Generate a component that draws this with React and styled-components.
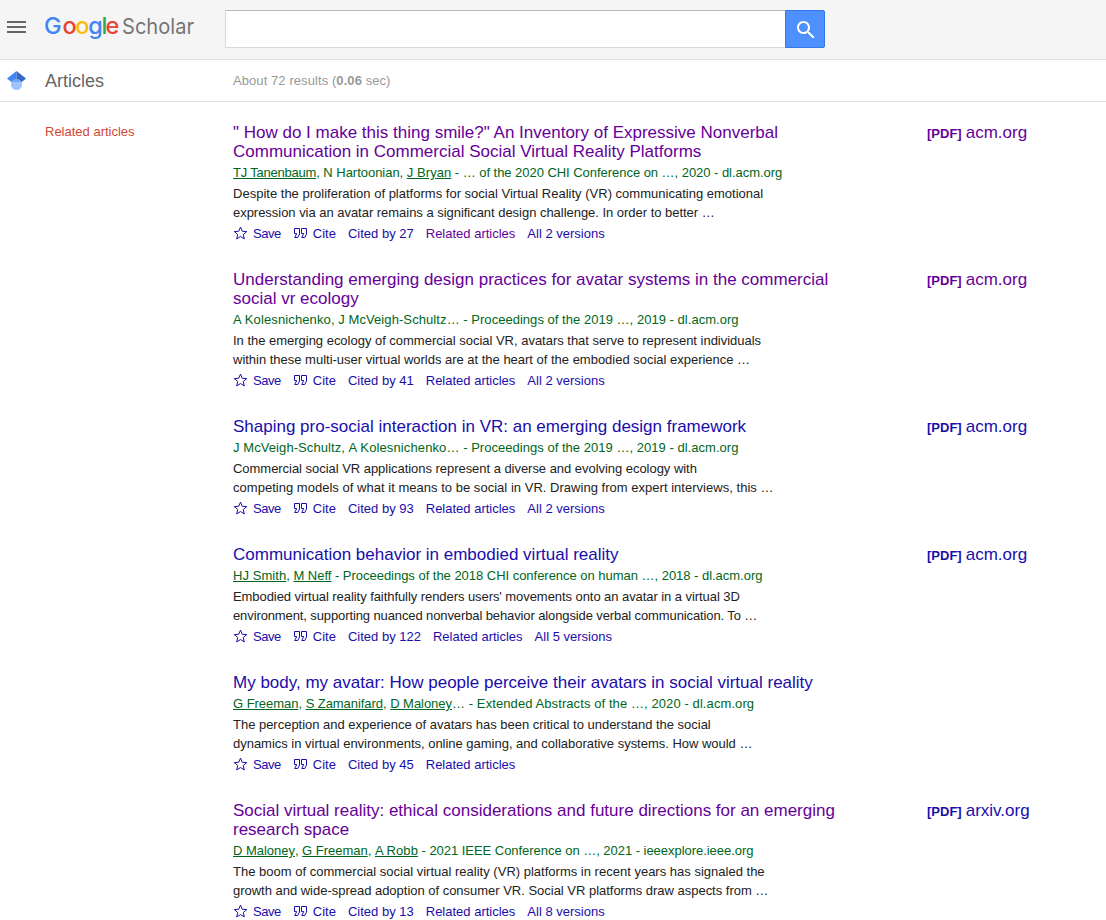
import React from "react";
import styled, { createGlobalStyle } from "styled-components";

const results = [
  {
    title: [
      '" How do I make this thing smile?" An Inventory of Expressive Nonverbal',
      "Communication in Commercial Social Virtual Reality Platforms",
    ],
    visited: true,
    relatedVisited: true,
    authors: [
      { name: "TJ Tanenbaum", link: true, spacing: -0.22 },
      { name: "N Hartoonian", spacing: -0.03 },
      { name: "J Bryan", link: true, spacing: 0.05 },
    ],
    source: " - … of the 2020 CHI Conference on …, 2020 - dl.acm.org",
    sourceSpacing: -0.04,
    snippet: [
      {
        text: "Despite the proliferation of platforms for social Virtual Reality (VR) communicating emotional",
        spacing: 0.009,
      },
      {
        text: "expression via an avatar remains a significant design challenge. In order to better …",
        spacing: -0.03,
      },
    ],
    cited: 27,
    versions: 2,
    pdf: "acm.org",
    pdfVisited: true,
  },
  {
    title: [
      "Understanding emerging design practices for avatar systems in the commercial",
      "social vr ecology",
    ],
    visited: true,
    authors: [
      { name: "A Kolesnichenko", spacing: 0.12 },
      { name: "J McVeigh-Schultz", spacing: 0.09 },
    ],
    source: "… - Proceedings of the 2019 …, 2019 - dl.acm.org",
    sourceSpacing: 0.03,
    snippet: [
      {
        text: "In the emerging ecology of commercial social VR, avatars that serve to represent individuals",
        spacing: -0.017,
      },
      {
        text: "within these multi-user virtual worlds are at the heart of the embodied social experience …",
        spacing: -0.011,
      },
    ],
    cited: 41,
    versions: 2,
    pdf: "acm.org",
    pdfVisited: true,
  },
  {
    title: ["Shaping pro-social interaction in VR: an emerging design framework"],
    authors: [
      { name: "J McVeigh-Schultz", spacing: 0.08 },
      { name: "A Kolesnichenko", spacing: 0.12 },
    ],
    source: "… - Proceedings of the 2019 …, 2019 - dl.acm.org",
    sourceSpacing: 0.03,
    snippet: [
      {
        text: "Commercial social VR applications represent a diverse and evolving ecology with",
        spacing: -0.037,
      },
      {
        text: "competing models of what it means to be social in VR. Drawing from expert interviews, this …",
        spacing: 0.024,
      },
    ],
    cited: 93,
    versions: 2,
    pdf: "acm.org",
  },
  {
    title: ["Communication behavior in embodied virtual reality"],
    authors: [
      { name: "HJ Smith", link: true, spacing: 0.06 },
      { name: "M Neff", link: true, spacing: -0.02 },
    ],
    source: " - Proceedings of the 2018 CHI conference on human …, 2018 - dl.acm.org",
    sourceSpacing: -0.026,
    snippet: [
      {
        text: "Embodied virtual reality faithfully renders users' movements onto an avatar in a virtual 3D",
        spacing: -0.064,
      },
      {
        text: "environment, supporting nuanced nonverbal behavior alongside verbal communication. To …",
        spacing: -0.11,
      },
    ],
    cited: 122,
    versions: 5,
    pdf: "acm.org",
  },
  {
    title: ["My body, my avatar: How people perceive their avatars in social virtual reality"],
    authors: [
      { name: "G Freeman", link: true, spacing: -0.04 },
      { name: "S Zamanifard", link: true, spacing: -0.06 },
      { name: "D Maloney", link: true, spacing: -0.04 },
    ],
    source: "… - Extended Abstracts of the …, 2020 - dl.acm.org",
    sourceSpacing: 0.09,
    snippet: [
      {
        text: "The perception and experience of avatars has been critical to understand the social",
        spacing: -0.017,
      },
      {
        text: "dynamics in virtual environments, online gaming, and collaborative systems. How would …",
        spacing: -0.018,
      },
    ],
    cited: 45,
  },
  {
    title: [
      "Social virtual reality: ethical considerations and future directions for an emerging",
      "research space",
    ],
    visited: true,
    authors: [
      { name: "D Maloney", link: true, spacing: -0.03 },
      { name: "G Freeman", link: true, spacing: -0.02 },
      { name: "A Robb", link: true, spacing: 0.06 },
    ],
    source: " - 2021 IEEE Conference on …, 2021 - ieeexplore.ieee.org",
    sourceSpacing: -0.035,
    snippet: [
      {
        text: "The boom of commercial social virtual reality (VR) platforms in recent years has signaled the",
        spacing: 0.006,
      },
      {
        text: "growth and wide-spread adoption of consumer VR. Social VR platforms draw aspects from …",
        spacing: -0.018,
      },
    ],
    cited: 13,
    versions: 8,
    pdf: "arxiv.org",
  },
];

const Logo = () => (
  <LogoSvg viewBox="0 0 152 32" aria-label="Google Scholar">
    <GoogleText y="22">
      <tspan x="-1" fill="#4285f4">G</tspan>
      <tspan x="17.5" fill="#ea4335">o</tspan>
      <tspan x="30.3" fill="#fbbc05">o</tspan>
      <tspan x="43.2" fill="#4285f4">g</tspan>
      <tspan x="56.5" fill="#34a853">l</tspan>
      <tspan x="60.5" fill="#ea4335">e</tspan>
    </GoogleText>
    <ScholarText x="77" y="22" textLength="72" lengthAdjust="spacingAndGlyphs">
      Scholar
    </ScholarText>
  </LogoSvg>
);

const StarIcon = () => (
  <LinkIcon viewBox="0 0 15 16">
    <path d="M7.5 11.57l3.824 2.308-1.015-4.35 3.379-2.926-4.45-.378L7.5 2.122 5.761 6.224l-4.449.378 3.379 2.926-1.015 4.35z" />
  </LinkIcon>
);

const QuoteIcon = () => (
  <LinkIcon viewBox="0 0 15 16">
    <path d="M6.5 3.5H1.5V8.5H3.75L1.75 12.5H4.75L6.5 9V3.5zM13.5 3.5H8.5V8.5H10.75L8.75 12.5H11.75L13.5 9V3.5z" />
  </LinkIcon>
);

const Result = ({ item }) => (
  <Row>
    <Main>
      <Title $visited={item.visited}>
        {item.title.map((line) => (
          <Line key={line}>{line}</Line>
        ))}
      </Title>
      <Authors>
        {item.authors.map((author, i) => (
          <React.Fragment key={author.name}>
            {i > 0 && ", "}
            <Author $link={author.link} $spacing={author.spacing}>
              {author.name}
            </Author>
          </React.Fragment>
        ))}
        <Author $spacing={item.sourceSpacing}>{item.source}</Author>
      </Authors>
      <Snippet>
        {item.snippet.map((line) => (
          <Line key={line.text} $spacing={line.spacing}>
            {line.text}
          </Line>
        ))}
      </Snippet>
      <Links>
        <IconLink $spacing={-0.45}>
          <StarIcon />
          Save
        </IconLink>
        <IconLink>
          <QuoteIcon />
          Cite
        </IconLink>
        <TextLink>Cited by {item.cited}</TextLink>
        <TextLink $visited={item.relatedVisited}>Related articles</TextLink>
        {item.versions && <TextLink>All {item.versions} versions</TextLink>}
      </Links>
    </Main>
    {item.pdf && (
      <Pdf $visited={item.pdfVisited}>
        <PdfTag>[PDF]</PdfTag>
        {item.pdf}
      </Pdf>
    )}
  </Row>
);

export default function App() {
  return (
    <Page>
      <GlobalStyle />
      <Header>
        <MenuIcon viewBox="0 0 19 12">
          <path d="M0 0h19v2H0zM0 5h19v2H0zM0 10h19v2H0z" />
        </MenuIcon>
        <Logo />
        <SearchInput aria-label="Search" />
        <SearchButton>
          <svg width="24" height="24" viewBox="0 0 24 24" fill="#fff">
            <path d="M15.5 14h-.79l-.28-.27C15.41 12.59 16 11.11 16 9.5 16 5.91 13.09 3 9.5 3S3 5.91 3 9.5 5.91 16 9.5 16c1.61 0 3.09-.59 4.23-1.57l.27.28v.79l5 4.99L20.49 19l-4.99-5zm-6 0C7.01 14 5 11.99 5 9.5S7.01 5 9.5 5 14 7.01 14 9.5 11.99 14 9.5 14z" />
          </svg>
        </SearchButton>
      </Header>
      <SubHeader>
        <CapIcon viewBox="0 0 512 512">
          <path fill="#4285f4" d="M256 411.12L0 202.667 256 0z" />
          <path fill="#356ac3" d="M256 411.12l256-208.453L256 0z" />
          <circle fill="#a0c3ff" cx="256" cy="362.667" r="149.333" />
          <path
            fill="#76a7fa"
            d="M121.037 298.667c23.968-50.453 75.392-85.334 134.963-85.334s110.995 34.881 134.963 85.334H121.037z"
          />
        </CapIcon>
        <Section>Articles</Section>
        <Stats>
          About 72 results (<b>0.06</b> sec)
        </Stats>
      </SubHeader>
      <Body>
        <Sidebar>Related articles</Sidebar>
        <List>
          {results.map((item) => (
            <Result key={item.title[0]} item={item} />
          ))}
        </List>
      </Body>
    </Page>
  );
}

const GlobalStyle = createGlobalStyle`
  body {
    margin: 0;
    background: #fff;
    color: #222;
    font-family: "Liberation Sans", Arial, sans-serif;
    font-size: 13px;
    line-height: 19px;
    overflow: hidden;
  }
`;

const Page = styled.div`
  height: 920px;
  overflow: hidden;
`;

const Header = styled.header`
  display: flex;
  align-items: flex-start;
  box-sizing: border-box;
  height: 60px;
  padding: 10px 0 0 7px;
  background: #f5f5f5;
  border-bottom: 1px solid #e0e0e0;
`;

const MenuIcon = styled.svg`
  width: 19px;
  height: 12px;
  margin: 11px 19px 0 0;
  fill: #666;
`;

const LogoSvg = styled.svg`
  width: 152px;
  height: 32px;
  margin: 2px 28px 0 0;
  overflow: visible;
`;

const GoogleText = styled.text`
  font-family: Inter, sans-serif;
  font-size: 23.5px;
  font-weight: 500;
`;

const ScholarText = styled.text`
  font-family: Inter, sans-serif;
  font-size: 22px;
  fill: #757575;
`;

const SearchInput = styled.input`
  box-sizing: border-box;
  width: 560px;
  height: 38px;
  padding: 0 8px;
  background: #fff;
  border: 1px solid #d9d9d9;
  border-top-color: #b9b9b9;
  border-right: 0;
  border-radius: 1px 0 0 1px;
  outline: none;
`;

const SearchButton = styled.button`
  display: flex;
  align-items: center;
  justify-content: center;
  box-sizing: border-box;
  width: 40px;
  height: 38px;
  padding: 1px 0 0 1px;
  background: #4d90fe;
  border: 1px solid #3079ed;
  border-radius: 0 2px 2px 0;
`;

const SubHeader = styled.div`
  display: flex;
  align-items: center;
  box-sizing: border-box;
  height: 42px;
  padding-left: 7px;
  border-bottom: 1px solid #e0e0e0;
`;

const CapIcon = styled.svg`
  width: 19px;
  height: 19px;
  margin: -1px 19px 0 0;
`;

const Section = styled.div`
  width: 188px;
  padding-top: 2px;
  color: #666;
  font-size: 18px;
`;

const Stats = styled.div`
  color: #999;
  letter-spacing: 0.08px;
`;

const Body = styled.div`
  display: flex;
  padding-top: 21px;
`;

const Sidebar = styled.div`
  width: 188px;
  margin-top: -1px;
  padding-left: 45px;
  color: #d14836;
`;

const List = styled.div`
  flex: 1;
`;

const Row = styled.div`
  display: flex;
  margin-bottom: 27px;
`;

const Main = styled.div`
  width: 694px;
`;

const Title = styled.h3`
  margin: 0 0 2px;
  color: ${(props) => (props.$visited ? "#609" : "#1a0dab")};
  font-size: 17px;
  font-weight: 400;
`;

const Line = styled.div`
  height: 19px;
  letter-spacing: ${(props) => props.$spacing || 0}px;
  white-space: nowrap;
`;

const Authors = styled.div`
  color: #006621;
  white-space: pre;
`;

const Author = styled.span`
  letter-spacing: ${(props) => props.$spacing || 0}px;
  text-decoration: ${(props) => (props.$link ? "underline" : "none")};
`;

const Snippet = styled.div`
  margin: 2px 0;
`;

const Links = styled.div`
  display: flex;
  gap: 12px;
  color: #1a0dab;
`;

const TextLink = styled.a`
  color: ${(props) => (props.$visited ? "#609" : "#1a0dab")};
`;

const IconLink = styled.a`
  display: flex;
  align-items: center;
  letter-spacing: ${(props) => props.$spacing || 0}px;
`;

const LinkIcon = styled.svg`
  width: 15px;
  height: 16px;
  margin: -1px 5px 0 0;
  fill: none;
  stroke: #1a0dab;
`;

const Pdf = styled.a`
  color: ${(props) => (props.$visited ? "#609" : "#1a0dab")};
  font-size: 17px;
`;

const PdfTag = styled.span`
  margin-right: 4px;
  font-size: 13px;
  font-weight: 700;
`;
